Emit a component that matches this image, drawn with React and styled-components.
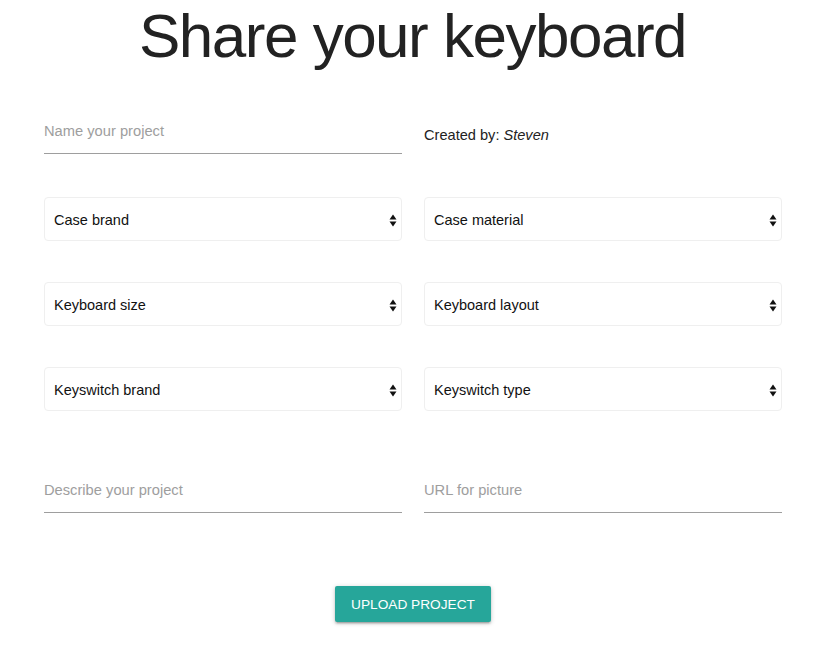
import React from "react";
import styled, { createGlobalStyle } from "styled-components";

const Global = createGlobalStyle`
  html, body { margin: 0; padding: 0; background: #fff; }
  body { font-family: "Liberation Sans", Arial, sans-serif; color: #212121; }
  * { box-sizing: border-box; }
`;

const Page = styled.div`
  width: 831px;
  padding-bottom: 40px;
`;

const Title = styled.h1`
  margin: 0;
  height: 88px;
  font-size: 62px;
  font-weight: 400;
  line-height: 71px;
  text-align: center;
  color: #222;
  padding-right: 6px;
  letter-spacing: -1.5px;
`;

const Form = styled.form`
  display: grid;
  grid-template-columns: 358px 358px;
  column-gap: 22px;
  margin-left: 44px;
  margin-top: 18px;
`;

const TextField = styled.div`
  height: 48px;
  border-bottom: 1px solid #9e9e9e;
  display: flex;
  align-items: center;
  padding-top: 2px;
  font-size: 14.7px;
  color: #9e9e9e;
  margin-top: ${(p) => p.$top || 0}px;
`;

const Created = styled.div`
  height: 48px;
  display: flex;
  align-items: center;
  padding-top: 10px;
  font-size: 14.6px;
  color: #222;
  margin-top: ${(p) => p.$top || 0}px;
  em { margin-left: 4px; }
`;

const SelectBox = styled.div`
  height: 44px;
  border: 1px solid #efefef;
  border-radius: 4px;
  display: flex;
  align-items: center;
  justify-content: space-between;
  padding: 2px 4px 0 9px;
  font-size: 14.5px;
  color: #111;
  margin-top: ${(p) => p.$top || 0}px;
  background: #fff;
`;

const Actions = styled.div`
  display: flex;
  justify-content: center;
  margin-top: 73px;
  padding-right: 5px;
`;

const Button = styled.button`
  width: 156px;
  height: 36px;
  border: none;
  border-radius: 2px;
  background: #26a69a;
  color: #fff;
  font-family: "Liberation Sans", Arial, sans-serif;
  font-size: 13.7px;
  padding: 1px 0 0;
  text-transform: uppercase;
  box-shadow: 0 2px 2px 0 rgba(0,0,0,0.14), 0 3px 1px -2px rgba(0,0,0,0.12), 0 1px 5px 0 rgba(0,0,0,0.2);
  cursor: pointer;
`;

const Arrows = () => (
  <svg width="8" height="13" viewBox="0 0 8 13">
    <path d="M4 0.5 L7.5 5.5 L0.5 5.5 Z" fill="#111" />
    <path d="M4 12.5 L7.5 7.5 L0.5 7.5 Z" fill="#111" />
  </svg>
);

const Select = ({ label, top }) => (
  <SelectBox $top={top}>
    <span>{label}</span>
    <Arrows />
  </SelectBox>
);

export default function App() {
  return (
    <Page>
      <Global />
      <Title>Share your keyboard</Title>
      <Form>
        <TextField>Name your project</TextField>
        <Created>
          Created by: <em>Steven</em>
        </Created>
        <Select label="Case brand" top={43} />
        <Select label="Case material" top={43} />
        <Select label="Keyboard size" top={41} />
        <Select label="Keyboard layout" top={41} />
        <Select label="Keyswitch brand" top={41} />
        <Select label="Keyswitch type" top={41} />
        <TextField $top={54}>Describe your project</TextField>
        <TextField $top={54}>URL for picture</TextField>
      </Form>
      <Actions>
        <Button type="button">Upload project</Button>
      </Actions>
    </Page>
  );
}
